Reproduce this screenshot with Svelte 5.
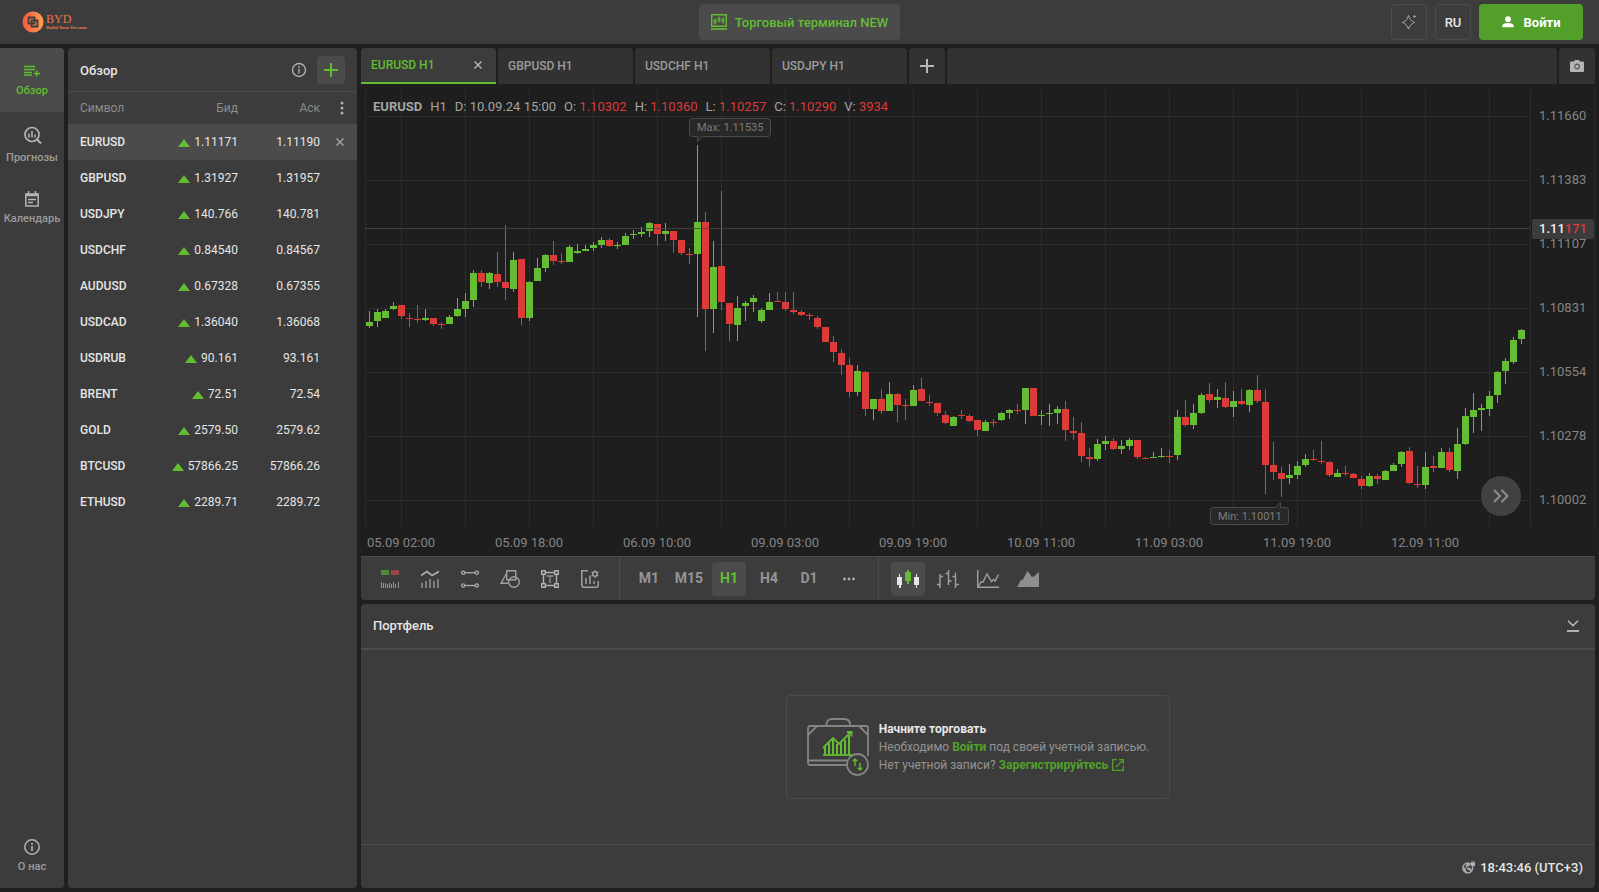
<script lang="ts">
    let selected = $state('EURUSD');
    let activeTab = $state('EURUSD');
    let timeframe = $state('H1');
    let chartType = $state('candles');

    const quotes = [
        { symbol: 'EURUSD', bid: '1.11171', ask: '1.11190' },
        { symbol: 'GBPUSD', bid: '1.31927', ask: '1.31957' },
        { symbol: 'USDJPY', bid: '140.766', ask: '140.781' },
        { symbol: 'USDCHF', bid: '0.84540', ask: '0.84567' },
        { symbol: 'AUDUSD', bid: '0.67328', ask: '0.67355' },
        { symbol: 'USDCAD', bid: '1.36040', ask: '1.36068' },
        { symbol: 'USDRUB', bid: '90.161', ask: '93.161' },
        { symbol: 'BRENT', bid: '72.51', ask: '72.54' },
        { symbol: 'GOLD', bid: '2579.50', ask: '2579.62' },
        { symbol: 'BTCUSD', bid: '57866.25', ask: '57866.26' },
        { symbol: 'ETHUSD', bid: '2289.71', ask: '2289.72' }
    ];

    const tabs = ['EURUSD', 'GBPUSD', 'USDCHF', 'USDJPY'];
    const timeframes = ['M1', 'M15', 'H1', 'H4', 'D1'];

    const ohlc = [
        ['O:', '1.10302'],
        ['H:', '1.10360'],
        ['L:', '1.10257'],
        ['C:', '1.10290'],
        ['V:', '3934']
    ];

    const prices = ['1.11660', '1.11383', '1.11107', '1.10831', '1.10554', '1.10278', '1.10002'];
    const times = [
        '05.09 02:00', '05.09 18:00', '06.09 10:00', '09.09 03:00', '09.09 19:00',
        '10.09 11:00', '11.09 03:00', '11.09 19:00', '12.09 11:00'
    ];
    const columns = Array.from({ length: 18 }, (_, i) => 40 + i * 64);

    // direction, high, body top, body bottom, low
    const candles = `
        g 311 322 326 328|g 309 312 321 327|g 309 311 318 318|g 302 306 309 310|r 305 305 316 319
        r 313 318 319 327|r 305 319 320 323|g 309 318 320 321|r 318 318 324 326|r 322 324 325 329
        g 315 317 324 324|g 298 309 316 317|g 293 301 309 317|g 270 273 300 307|r 270 273 282 287
        g 272 273 283 289|r 252 274 282 287|r 225 282 288 300|g 252 260 289 292|r 259 259 318 325
        g 281 282 318 321|g 258 268 281 281|g 254 255 268 272|r 241 255 261 265|r 253 261 262 264
        g 245 247 262 262|g 244 251 253 254|g 245 249 251 251|g 242 245 248 251|g 237 240 245 248
        r 238 240 246 247|g 242 245 246 249|g 233 236 245 245|g 230 234 235 239|g 227 232 234 237
        g 222 223 231 237|r 224 224 234 246|g 223 231 234 241|r 231 231 240 253|r 240 240 253 255
        r 248 254 255 264|g 145 222 254 317|r 212 222 309 351|g 241 267 309 333|r 191 266 302 310
        r 303 303 324 341|g 296 308 325 341|g 301 303 306 321|g 295 298 302 312|g 308 310 321 323
        g 293 302 310 310|r 292 301 302 302|r 292 302 309 311|r 292 310 312 314|r 310 312 315 316
        r 313 315 316 320|r 316 318 327 329|r 327 327 342 342|r 336 342 352 362|r 349 353 365 375
        r 358 365 392 397|g 365 371 392 396|r 371 372 409 416|g 399 399 409 420|r 389 399 411 414
        g 382 394 411 411|r 393 394 405 422|r 399 405 406 420|g 385 390 406 406|r 378 389 401 401
        r 395 402 403 406|r 403 403 413 416|r 411 415 423 424|g 416 417 426 426|r 410 415 416 419
        r 414 416 421 422|r 420 420 430 436|g 420 422 431 431|r 419 422 423 427|g 412 413 420 421
        g 409 410 413 419|r 404 410 411 414|g 388 388 410 424|r 388 388 416 416|g 410 415 416 425
        g 404 413 414 426|g 406 409 413 424|r 401 409 430 441|r 417 431 433 440|r 422 433 456 462
        r 448 457 459 467|g 439 444 459 461|g 436 441 444 450|r 438 441 449 450|g 440 446 449 454
        g 438 440 446 450|r 440 440 457 459|r 457 458 459 459|g 452 457 458 458|g 448 456 457 458
        r 450 456 457 463|g 410 417 455 460|r 400 417 425 427|g 404 413 425 429|g 393 395 413 414
        r 383 394 400 403|g 389 397 400 408|r 382 398 407 408|g 391 401 407 417|r 389 401 404 405
        g 389 390 405 412|r 375 390 401 403|r 389 402 465 494|r 442 465 472 480|r 467 473 479 497
        g 464 475 478 484|g 461 466 475 479|g 454 459 465 467|r 450 459 460 461|r 441 461 462 464
        r 461 462 475 477|g 469 473 477 477|r 466 473 474 476|r 473 474 478 478|r 476 479 486 489
        g 473 476 486 487|r 474 476 479 484|g 470 471 480 480|g 463 465 471 471|g 451 452 464 467
        r 447 451 483 484|r 466 484 485 488|g 452 467 485 489|r 456 466 468 472|g 448 452 468 468
        r 448 452 470 472|g 428 444 471 479|g 408 416 444 445|g 393 410 417 433|g 404 408 410 431
        g 391 396 409 416|g 371 372 395 403|g 358 361 371 384|g 337 340 362 364|g 329 330 339 344
    `
        .trim()
        .split(/[|\n]/)
        .map((item, i) => {
            const [dir, ...values] = item.trim().split(' ');
            const [high, top, bottom, low] = values.map((v) => Number(v) - 84);
            return { x: 5 + i * 8, up: dir === 'g', high, top, bottom, low };
        });
</script>

<div class="app">
    <header class="topbar">
        <div class="topbar-side">
            <a class="logo" href="#home" aria-label="BYD">
                <svg width="22" height="22" viewBox="0 0 22 22">
                    <defs>
                        <linearGradient id="logo-fill" x1="0" x2="1">
                            <stop offset="0" stop-color="#f8573f" />
                            <stop offset="1" stop-color="#ffa052" />
                        </linearGradient>
                    </defs>
                    <circle cx="11" cy="11" r="10.5" fill="url(#logo-fill)" />
                    <path d="M6.5 6.500h6v6h-6zM9.500 9.500h6v6h-6z" fill="none" stroke="#3c3c3c" stroke-width="1.800" />
                </svg>
                <span class="logo-text">
                    <span class="logo-name">BYD</span>
                    <span class="logo-slogan">Build Your Dreams</span>
                </span>
            </a>
        </div>
        <button class="terminal">
            <svg width="16" height="16" viewBox="0 0 16 16" fill="none" stroke="currentColor">
                <path d="M.7.700h14.600v11.600H.7z" stroke-width="1.400" />
                <path d="M0 15h16" stroke-width="1.600" />
                <path d="M4 4.500v6M8 2.500v6M12 3.500v6" />
                <path d="M3 6h2v3H3zM7 4h2v3H7zM11 5h2v3h-2z" stroke-width="0.800" />
            </svg>
            Торговый терминал NEW
        </button>
        <div class="topbar-side actions">
            <button class="square" aria-label="Тема">
                <svg width="16" height="16" viewBox="0 0 16 16" fill="none" stroke="#a8a8a8">
                    <path d="M7.500 1.500C8.500 5 10 7 13.500 8.500 10 10 8.500 12 7.500 15 6.500 12 5 10 1.500 8.500 5 7 6.500 5 7.500 1.500z" />
                    <path d="M13.500 1v3M12 2.500h3" stroke-width="0.800" />
                </svg>
            </button>
            <button class="square lang">RU</button>
            <button class="login">
                <svg width="12" height="12" viewBox="0 0 12 12" fill="currentColor">
                    <circle cx="6" cy="3.200" r="2.900" />
                    <path d="M.3 11.200V9.800C.3 7.800 3.600 7 6 7s5.700.8 5.700 2.800v1.400z" />
                </svg>
                Войти
            </button>
        </div>
    </header>

    <div class="body">
        <nav class="sidebar">
            <button class="nav-item active">
                <svg width="16" height="16" viewBox="0 0 16 16" stroke="currentColor" stroke-width="1.500" fill="none">
                    <path d="M0 3.500h11M0 6.500h11M0 9.500h8M0 12h8M12.700 7.500v6M10 10.500h6" />
                </svg>
                Обзор
            </button>
            <button class="nav-item">
                <svg width="22" height="22" viewBox="0 0 22 22" fill="none" stroke="currentColor" stroke-width="1.700">
                    <circle cx="11" cy="10.500" r="7" />
                    <path d="M16 15.500l4 4" stroke-width="2" />
                    <path d="M8 9.500v4M11 7v6.500M14 10.500v3" stroke-width="1.600" />
                </svg>
                Прогнозы
            </button>
            <button class="nav-item">
                <svg width="16" height="16" viewBox="0 0 16 16" fill="none" stroke="currentColor" stroke-width="1.500">
                    <path d="M1.800 3h12.400v12H1.800z" />
                    <path d="M1.800 4h12.400" stroke-width="2.500" />
                    <path d="M4.500 0v3M11.500 0v3M4 8.500h8M4 11.500h5" />
                </svg>
                Календарь
            </button>
            <button class="nav-item bottom">
                <svg width="16" height="16" viewBox="0 0 16 16" fill="none" stroke="currentColor" stroke-width="1.500">
                    <circle cx="8" cy="8" r="7.200" />
                    <path d="M8 4v1.800M8 7v5" stroke-width="1.700" />
                </svg>
                О нас
            </button>
        </nav>

        <section class="watchlist">
            <div class="panel-head">
                <h2>Обзор</h2>
                <svg width="16" height="16" viewBox="0 0 16 16" fill="none" stroke="#b0b0b0" stroke-width="1.400">
                    <circle cx="8" cy="8" r="6.500" />
                    <path d="M8 4.300v1.600M8 7v4.500" />
                </svg>
                <button class="add" aria-label="Добавить символ">
                    <svg width="14" height="14" viewBox="0 0 14 14" stroke="currentColor" stroke-width="2"><path d="M7 0v14M0 7h14" /></svg>
                </button>
            </div>
            <table>
                <thead>
                    <tr>
                        <th>Символ</th>
                        <th class="num">Бид</th>
                        <th class="num">Аск</th>
                        <th class="tool">
                            <button class="plain" aria-label="Меню">
                                <svg width="4" height="14" viewBox="0 0 4 14" fill="#b0b0b0">
                                    <circle cx="2" cy="2" r="1.500" /><circle cx="2" cy="7" r="1.500" /><circle cx="2" cy="12" r="1.500" />
                                </svg>
                            </button>
                        </th>
                    </tr>
                </thead>
                <tbody>
                    {#each quotes as q (q.symbol)}
                        <tr class:selected={q.symbol === selected} onclick={() => (selected = q.symbol)}>
                            <td class="symbol">{q.symbol}</td>
                            <td class="num"><span class="up"></span>{q.bid}</td>
                            <td class="num">{q.ask}</td>
                            <td class="tool">
                                {#if q.symbol === selected}
                                    <button class="plain" aria-label="Удалить">
                                        <svg width="8" height="8" viewBox="0 0 8 8" stroke="#a8a8a8" stroke-width="1.300"><path d="M.5.500l7 7M7.500.500l-7 7" /></svg>
                                    </button>
                                {/if}
                            </td>
                        </tr>
                    {/each}
                </tbody>
            </table>
        </section>

        <main class="main">
            <div class="tabs">
                {#each tabs as tab (tab)}
                    <div class="tab" class:active={tab === activeTab}>
                        <button class="plain tab-name" onclick={() => (activeTab = tab)}>{tab} H1</button>
                        {#if tab === activeTab}
                            <button class="plain" aria-label="Закрыть">
                                <svg width="8" height="8" viewBox="0 0 8 8" stroke="#b8b8b8" stroke-width="1.300"><path d="M.5.500l7 7M7.500.500l-7 7" /></svg>
                            </button>
                        {/if}
                    </div>
                {/each}
                <button class="tab-tool" aria-label="Новая вкладка">
                    <svg width="14" height="14" viewBox="0 0 14 14" stroke="#b8b8b8" stroke-width="2"><path d="M7 0v14M0 7h14" /></svg>
                </button>
                <div class="tab-space"></div>
                <button class="tab-tool" aria-label="Снимок">
                    <svg width="14" height="12" viewBox="0 0 14 12">
                        <path d="M4 1.500L5 0h4l1 1.500h3a1 1 0 0 1 1 1V11a1 1 0 0 1-1 1H1a1 1 0 0 1-1-1V2.500a1 1 0 0 1 1-1z" fill="#b4b4b4" />
                        <circle cx="7" cy="6.500" r="2.300" fill="none" stroke="#555" stroke-width="1.200" />
                    </svg>
                </button>
            </div>

            <div class="chart">
                <svg class="plot">
                    <g class="grid">
                        <rect x="4" y="5" width="1" height="438" />
                        {#each columns as x}
                            <rect {x} y="5" width="1" height="438" />
                        {/each}
                        {#each prices as _, i}
                            <rect x="4" y={32 + i * 64} width="100%" height="1" />
                        {/each}
                    </g>
                    {#each candles as c}
                        <g fill={c.up ? '#64bd33' : '#dd3a3a'}>
                            <rect x={c.x + 3} y={c.high} width="1" height={c.low - c.high} />
                            <rect x={c.x} y={c.top} width="7" height={c.bottom - c.top} />
                        </g>
                    {/each}
                    <rect class="price-line" x="4" y="144" width="100%" height="1" />
                    <g class="marker">
                        <path d="M331.500 34.500h75a3 3 0 0 1 3 3v12a3 3 0 0 1-3 3h-65l-5 5v-5h-5a3 3 0 0 1-3-3v-12a3 3 0 0 1 3-3z" />
                        <text x="336" y="47">Max: 1.11535</text>
                        <path d="M852.500 423.500h62l5-5v5h5a3 3 0 0 1 3 3v11a3 3 0 0 1-3 3h-72a3 3 0 0 1-3-3v-11a3 3 0 0 1 3-3z" />
                        <text x="857" y="436">Min: 1.10011</text>
                    </g>
                    {#each times as time, i}
                        <text class="axis-label" x={40 + i * 128} y="463" text-anchor="middle">{time}</text>
                    {/each}
                </svg>
                <svg class="price-axis">
                    <g class="grid">
                        <rect x="0" y="5" width="1" height="438" />
                        <rect x="64" y="5" width="1" height="438" />
                    </g>
                    {#each prices as price, i}
                        <text class="axis-label" x="9" y={36 + i * 64}>{price}</text>
                    {/each}
                    <rect x="2" y="135" width="62" height="20" rx="2" fill="#3c3c3c" />
                    <text class="axis-label current" x="9" y="149">1.11<tspan fill="#dd3a3a">171</tspan></text>
                </svg>
                <div class="legend">
                    <b>EURUSD</b>
                    <span>H1</span>
                    <span>D: 10.09.24 15:00</span>
                    {#each ohlc as [name, value]}
                        <span>{name} <em>{value}</em></span>
                    {/each}
                </div>
                <button class="scroll-end" aria-label="К последней свече">
                    <svg width="16" height="14" viewBox="0 0 16 14" fill="none" stroke="#949494" stroke-width="1.800"><path d="M1 1l6 6-6 6M8.500 1l6 6-6 6" /></svg>
                </button>
            </div>

            <div class="toolbar">
                <div class="group">
                    <button class="tool-btn" aria-label="Торговля">
                        <svg width="18" height="18" viewBox="0 0 18 18">
                            <rect width="8" height="5" fill="#4f8a32" /><rect x="10" width="8" height="5" fill="#9b4444" />
                            <path d="M.5 12v6M2.500 13v5M4.500 13v5M6.500 14v4M8.500 13v5M10.500 14v4M12.500 12v6M14.500 14v4M17.500 12v6" stroke="#949494" />
                        </svg>
                    </button>
                    <button class="tool-btn" aria-label="Индикаторы">
                        <svg width="18" height="18" viewBox="0 0 18 18" fill="none" stroke="#b0b0b0">
                            <path d="M0 5.500l6-4 5 4 7-4" stroke-width="1.800" />
                            <path d="M1 13v5M5 11v7M9 9v9M13 11v7M17 9v9" stroke-width="1.500" stroke="#949494" />
                        </svg>
                    </button>
                    <button class="tool-btn" aria-label="Линии">
                        <svg width="18" height="18" viewBox="0 0 18 18" fill="none" stroke="#aaa" stroke-width="1.300">
                            <circle cx="2.200" cy="2.700" r="1.600" /><circle cx="15.800" cy="2.700" r="1.600" /><path d="M4 2.700h10" />
                            <circle cx="2.200" cy="15.500" r="1.600" /><circle cx="15.800" cy="15.500" r="1.600" /><path d="M4 15.500h10" />
                        </svg>
                    </button>
                    <button class="tool-btn" aria-label="Фигуры">
                        <svg width="20" height="18" viewBox="0 0 20 18" fill="none" stroke="#a0a0a0" stroke-width="1.400">
                            <path d="M6.700.700h9v9h-9z" />
                            <path d="M6.700 3L1 13.300h7.500" />
                            <circle cx="14" cy="12" r="5.300" />
                        </svg>
                    </button>
                    <button class="tool-btn" aria-label="Текст">
                        <svg width="18" height="18" viewBox="0 0 18 18" fill="none" stroke="#b0b0b0" stroke-width="1.400">
                            <path d="M.7.700h3.600v3.600H.7zM13.700.700h3.600v3.600h-3.600zM.7 13.700h3.600v3.600H.7zM13.700 13.700h3.600v3.600h-3.600zM4.300 2.500h9.400M4.300 15.500h9.400M2.500 4.300v9.400M15.500 4.300v9.400" />
                            <path d="M5.500 6h7M9 6v7" stroke="#909090" />
                        </svg>
                    </button>
                    <button class="tool-btn" aria-label="Настройки графика">
                        <svg width="18" height="18" viewBox="0 0 18 18" fill="none" stroke="#a0a0a0" stroke-width="1.500">
                            <path d="M7 .8H.8v14.400a2 2 0 0 0 2 2h12.400a2 2 0 0 0 2-2V11" />
                            <path d="M5 8v6M9 5.500V14M13 11v3" />
                            <circle cx="14" cy="4" r="2.300" />
                            <path d="M14 0v1.500M14 6.500V8M10.500 2l1.300.8M16.200 5.200l1.300.8M10.500 6l1.300-.8M16.200 2.800l1.300-.8" stroke-width="1.200" />
                        </svg>
                    </button>
                </div>
                <div class="group">
                    {#each timeframes as tf}
                        <button class="tool-btn tf" class:active={tf === timeframe} onclick={() => (timeframe = tf)}>{tf}</button>
                    {/each}
                    <button class="tool-btn" aria-label="Ещё">
                        <svg width="12" height="4" viewBox="0 0 12 4" fill="#b0b0b0"><circle cx="1.500" cy="2" r="1.400" /><circle cx="6" cy="2" r="1.400" /><circle cx="10.500" cy="2" r="1.400" /></svg>
                    </button>
                </div>
                <div class="group">
                    <button class="tool-btn" class:active={chartType === 'candles'} onclick={() => (chartType = 'candles')} aria-label="Свечи">
                        <svg width="22" height="18" viewBox="0 0 22 18">
                            <path d="M2 4h1v3h2v8H4v3H2v-3H0V7h2zM19 4h1v3h2v8h-2v3h-1v-3h-2V7h2z" fill="#e4e4e4" />
                            <path d="M10 0h2v2h2v9h-2v3h-2v-3H8V2h2z" fill="#64bd33" />
                        </svg>
                    </button>
                    <button class="tool-btn" class:active={chartType === 'bars'} onclick={() => (chartType = 'bars')} aria-label="Бары">
                        <svg width="22" height="18" viewBox="0 0 22 18" fill="none" stroke="#a0a0a0" stroke-width="1.400">
                            <path d="M3 4v14M0 14.500h3M3 6.500h3M11.500 0v15M8.500 3.500h3M11.500 11h3M18.500 2.500V18M15.500 6.500h3M18.500 14.500H22" />
                        </svg>
                    </button>
                    <button class="tool-btn" class:active={chartType === 'line'} onclick={() => (chartType = 'line')} aria-label="Линия">
                        <svg width="22" height="18" viewBox="0 0 22 18" fill="none" stroke="#a0a0a0" stroke-width="1.400">
                            <path d="M.7 0v17.300H22" />
                            <path d="M1 17l3-5h2l4-8 4.500 7.500 2-2L18 11l3.500-6.500" />
                        </svg>
                    </button>
                    <button class="tool-btn" class:active={chartType === 'area'} onclick={() => (chartType = 'area')} aria-label="Область">
                        <svg width="22" height="16" viewBox="0 0 22 16" fill="#8e8e8e"><path d="M0 16l4-7 2-.5L10.500 0 15 6l2-.5L22 1v15z" /></svg>
                    </button>
                </div>
            </div>

            <section class="portfolio">
                <div class="portfolio-head">
                    <h2>Портфель</h2>
                    <button class="plain" aria-label="Свернуть">
                        <svg width="12" height="12" viewBox="0 0 12 12" fill="none" stroke="#c0c0c0"><path d="M1 .8l5 5 5-5" stroke-width="1.500" /><path d="M0 11h12" stroke-width="1.800" /></svg>
                    </button>
                </div>
                <div class="portfolio-body">
                    <div class="card">
                        <svg width="62" height="58" viewBox="0 0 62 58" fill="none" stroke="#848484" stroke-width="1.800">
                            <path d="M19.500 8V6.500C19.500 3 22 1 25 1h12c3.500 0 6 2 6 5.500V8" />
                            <path d="M39 47H3a2 2 0 0 1-2-2V10a2 2 0 0 1 2-2h56a2 2 0 0 1 2 2v28" />
                            <path d="M1 42.500h39" />
                            <path d="M1 17l9-9M52 8l9 9" />
                            <g stroke="#62bd31">
                                <path d="M16 37h29" />
                                <path d="M18 37v-8M22 37V25M26 37V21M30 37V26M34 37V25M38 37V22M42 37V17" stroke-width="2" />
                                <path d="M16 30l10-10 6 6 12-12" />
                                <path d="M40 14h4.500v4.500" />
                            </g>
                            <circle cx="50.500" cy="46.500" r="10.500" fill="#3c3c3c" />
                            <g stroke="#62bd31" stroke-width="1.400">
                                <path d="M48 48v-7M45.800 43.200L48 41l2.200 2.200M53 45v7M50.800 49.800L53 52l2.200-2.200" />
                            </g>
                        </svg>
                        <div class="card-text">
                            <strong>Начните торговать</strong>
                            <p>Необходимо <a href="#login">Войти</a> под своей учетной записью.</p>
                            <p>
                                Нет учетной записи? <a href="#register">Зарегистрируйтесь
                                    <svg width="12" height="12" viewBox="0 0 12 12" fill="none" stroke="currentColor" stroke-width="1.300"><path d="M5 .7H.7v10.600h10.600V7M7 .7h4.300V5M11 1L4 8" /></svg></a>
                            </p>
                        </div>
                    </div>
                </div>
                <footer class="status">
                    <svg width="13" height="13" viewBox="0 0 13 13">
                        <circle cx="5.800" cy="7" r="5" fill="none" stroke="#a8a8a8" stroke-width="1.300" />
                        <path d="M1 5l3 3v1.500l1.500 1.500V12C3 12 1 10 .8 7zM5 2h3v2L6.500 5.500H5v1.300h3.500L10 9l-1.500 2-1.300-2H6L4.500 7 3.500 5z" fill="#a8a8a8" />
                        <rect x="9" y="1.500" width="4" height="3.500" fill="#b4b4b4" />
                        <path d="M9.800 2V1a1.200 1.200 0 0 1 2.400 0v1" fill="none" stroke="#b4b4b4" stroke-width="0.700" />
                    </svg>
                    <time>18:43:46 (UTC+3)</time>
                </footer>
            </section>
        </main>
    </div>
</div>

<style>
    :global(body) {
        background: #1e1e1e;
    }

    .app {
        display: flex;
        flex-direction: column;
        height: 100vh;
        box-sizing: border-box;
        padding-bottom: 4px;
        background: #1f1f1f;
        color: #e6e6e6;
        font-family: Roboto, sans-serif;
        font-size: 12px;
    }

    button {
        display: flex;
        align-items: center;
        justify-content: center;
        box-sizing: border-box;
        padding: 0;
        border: none;
        background: none;
        color: inherit;
        font: inherit;
        cursor: pointer;
    }

    svg {
        display: block;
        flex: none;
    }

    h2 {
        flex: 1;
        margin: 0;
        font-size: 13px;
        font-weight: 500;
    }

    .topbar {
        display: flex;
        align-items: center;
        height: 44px;
        background: #3c3c3c;
    }

    .topbar-side {
        box-sizing: border-box;
        width: 0;
        flex: 1 1 auto;
    }

    .logo {
        display: flex;
        align-items: center;
        gap: 2px;
        padding-left: 22px;
        color: #e9744a;
        font-family: "Liberation Serif", serif;
        text-decoration: none;
    }

    .logo-text {
        display: flex;
        flex-direction: column;
    }

    .logo-name {
        font-size: 12px;
        line-height: 11px;
    }

    .logo-slogan {
        font-size: 5px;
        font-weight: bold;
        line-height: 6px;
    }

    .terminal {
        gap: 8px;
        height: 36px;
        padding: 0 12px;
        border-radius: 4px;
        background: #4b4b4b;
        color: #62bd31;
        font-size: 13px;
        font-weight: 500;
    }

    .actions {
        display: flex;
        justify-content: flex-end;
        gap: 8px;
    }

    .actions button:last-child {
        margin-right: 16px;
    }

    .square {
        width: 36px;
        height: 36px;
        border: 1px solid #4b4b4b;
        border-radius: 4px;
    }

    .lang {
        font-size: 13px;
        font-weight: 500;
    }

    .login {
        gap: 10px;
        width: 104px;
        height: 36px;
        border-radius: 4px;
        background: #52a02a;
        color: #fff;
        font-size: 13px;
        font-weight: 700;
    }

    .body {
        display: flex;
        flex: 1;
        gap: 4px;
        min-height: 0;
        padding: 4px 4px 0 0;
    }

    .sidebar {
        display: flex;
        flex-direction: column;
        width: 64px;
        border-radius: 0 4px 4px 0;
        background: #3c3c3c;
        overflow: hidden;
    }

    .nav-item {
        flex-direction: column;
        gap: 5px;
        height: 64px;
        padding-top: 1px;
        color: #9c9c9c;
        font-size: 11px;
        font-weight: 500;
        line-height: 14px;
    }

    .nav-item svg {
        color: #b4b4b4;
    }

    .nav-item.active,
    .nav-item.active svg {
        background: #4b4b4b;
        color: #62bd31;
    }

    .nav-item.bottom {
        margin-top: auto;
    }

    .watchlist {
        width: 289px;
        border-radius: 4px;
        background: #3c3c3c;
        overflow: hidden;
    }

    .panel-head {
        display: flex;
        align-items: center;
        gap: 10px;
        height: 43px;
        padding: 0 12px;
        border-bottom: 1px solid #4b4b4b;
    }

    .panel-head h2 {
        padding-top: 2px;
    }

    .add {
        width: 28px;
        height: 28px;
        border-radius: 4px;
        background: #4b4b4b;
        color: #62bd31;
    }

    table {
        width: 100%;
        border-collapse: collapse;
        table-layout: fixed;
    }

    th {
        height: 32px;
        padding: 0;
        color: #8c8c8c;
        font-weight: 400;
        text-align: left;
    }

    td {
        height: 36px;
        padding: 0;
    }

    th:first-child,
    td:first-child {
        width: 76px;
        padding-left: 12px;
    }

    .num {
        width: 82px;
        text-align: right;
    }

    .symbol {
        font-weight: 500;
    }

    .tool button {
        width: 12px;
        margin-left: 14px;
    }

    th.tool button {
        margin-left: 16px;
    }

    .selected {
        background: #4b4b4b;
    }

    .up {
        display: inline-block;
        margin-right: 4px;
        border: 6px solid transparent;
        border-top: 0;
        border-bottom: 8px solid #62bd31;
        vertical-align: -1px;
    }

    .main {
        display: flex;
        flex: 1;
        flex-direction: column;
        min-width: 0;
    }

    .tabs {
        display: flex;
        gap: 2px;
        height: 36px;
    }

    .tab {
        display: flex;
        align-items: center;
        box-sizing: border-box;
        width: 135px;
        padding: 0 14px 0 10px;
        border-radius: 4px 4px 0 0;
        background: #323232;
        color: #9c9c9c;
        font-weight: 500;
    }

    .tab.active {
        border-bottom: 2px solid #62bd31;
        border-radius: 4px 4px 0 0;
        background: #3c3c3c;
        color: #62bd31;
    }

    .tab-name {
        flex: 1;
        justify-content: flex-start;
    }

    .tab-tool,
    .tab-space {
        width: 36px;
        border-radius: 4px 4px 0 0;
        background: #323232;
    }

    .tab-space {
        flex: 1;
    }

    .chart {
        position: relative;
        display: flex;
        flex: 1;
        min-height: 0;
        background: #1e1e1e;
    }

    .plot {
        flex: 1;
        min-width: 0;
        height: 100%;
    }

    .price-axis {
        width: 65px;
        height: 100%;
    }

    .grid {
        fill: #2c2c2c;
    }

    .price-line {
        fill: #464646;
        opacity: 0.8;
    }

    .axis-label {
        fill: #848484;
        font-size: 13px;
    }

    .current {
        fill: #f0f0f0;
        font-weight: 500;
    }

    .marker path {
        fill: #282828;
        stroke: #4b4b4b;
    }

    .marker text {
        fill: #7c7c7c;
        font-size: 11px;
    }

    .legend {
        position: absolute;
        top: 15px;
        left: 12px;
        display: flex;
        gap: 8px;
        color: #a4a4a4;
        font-size: 13px;
        line-height: 16px;
    }

    .legend em {
        color: #dd3a3a;
        font-style: normal;
    }

    .scroll-end {
        position: absolute;
        right: 74px;
        bottom: 40px;
        width: 40px;
        height: 40px;
        border-radius: 50%;
        background: #414141;
    }

    .toolbar {
        display: flex;
        height: 43px;
        border-top: 1px solid #4b4b4b;
        border-radius: 0 0 4px 4px;
        background: #3c3c3c;
    }

    .group {
        display: flex;
        align-items: center;
        gap: 6px;
        padding: 1px 12px 0;
    }

    .group + .group {
        border-left: 1px solid #4b4b4b;
    }

    .tool-btn {
        width: 34px;
        height: 34px;
        border-radius: 4px;
    }

    .tool-btn.active {
        background: #4b4b4b;
    }

    .tf {
        padding-bottom: 2px;
        color: #949494;
        font-size: 14px;
        font-weight: 700;
    }

    .tf.active {
        color: #62bd31;
    }

    .portfolio {
        display: flex;
        flex-direction: column;
        height: 284px;
        margin-top: 4px;
        border-radius: 4px;
        background: #3c3c3c;
    }

    .portfolio-head {
        display: flex;
        align-items: center;
        height: 44px;
        padding: 0 16px 0 12px;
        border-bottom: 2px solid #4b4b4b;
    }

    .portfolio-head h2 {
        padding-bottom: 2px;
    }

    .portfolio-body {
        display: flex;
        flex: 1;
        align-items: center;
        justify-content: center;
    }

    .card {
        display: flex;
        align-items: center;
        gap: 10px;
        box-sizing: border-box;
        height: 104px;
        padding: 0 20px;
        border: 1px solid #4b4b4b;
        border-radius: 4px;
    }

    .card-text {
        color: #949494;
        line-height: 18px;
    }

    .card-text strong {
        color: #e6e6e6;
        font-weight: 700;
    }

    .card-text p {
        margin: 0;
    }

    .card-text a {
        color: #52a02a;
        font-weight: 700;
        text-decoration: none;
    }

    .card-text a svg {
        display: inline-block;
        margin-left: 1px;
        vertical-align: -2px;
    }

    .status {
        display: flex;
        align-items: center;
        justify-content: flex-end;
        gap: 5px;
        height: 44px;
        padding: 2px 12px 0 0;
        box-sizing: border-box;
        border-top: 1px solid #4b4b4b;
        font-size: 13px;
        font-weight: 500;
    }
</style>
